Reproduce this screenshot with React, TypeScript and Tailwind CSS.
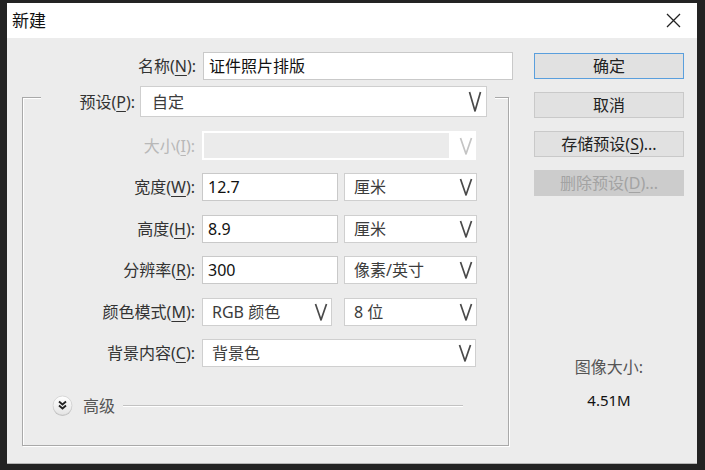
import React from 'react'

const font = "font-['Noto_Sans','Noto_Sans_CJK_SC',sans-serif]"

const Chevron: React.FC<{ tall?: boolean; disabled?: boolean }> = ({ tall, disabled }) => (
  <svg width="14" height={tall ? 21 : 18} viewBox={tall ? '0 0 14 21' : '0 0 14 18'} fill="none">
    <polyline
      points={tall ? '1.5,1 7,20 12.5,1' : '1.5,1 7,17 12.5,1'}
      stroke={disabled ? '#c4c4c4' : '#4a4a4a'}
      strokeWidth="1.7"
      strokeLinejoin="round"
    />
  </svg>
)

// label like 名称(N):
const Label: React.FC<{ text: string; mn: string; w: string; disabled?: boolean }> = ({ text, mn, w, disabled }) => (
  <div className={`${w} shrink-0 text-right text-[16px] leading-none ${disabled ? 'text-[#b8b8b8]' : 'text-[#333]'}`}>
    {text}(<span className="underline underline-offset-[3px]">{mn}</span>):
  </div>
)

const TextBox: React.FC<{ value: string; w: string }> = ({ value, w }) => (
  <div className={`${w} h-[28px] border border-[#c9c9c9] bg-white flex items-center pl-[5px] text-[16px] text-[#111]`}>
    {value}
  </div>
)

const Select: React.FC<{ value: string; w: string; pl?: string }> = ({ value, w, pl = 'pl-[9px]' }) => (
  <div className={`${w} h-[28px] border border-[#cfcfcf] bg-white flex items-center justify-between ${pl} pr-[3px] text-[16px] text-[#3c3c3c]`}>
    <span>{value}</span>
    <Chevron />
  </div>
)

const Button: React.FC<{ children: React.ReactNode; primary?: boolean; disabled?: boolean }> = ({ children, primary, disabled }) => (
  <div
    className={`h-[26px] flex items-center justify-center text-[16px] border ${
      disabled
        ? 'bg-[#cccccc] border-[#cccccc] text-[#a3a3a3]'
        : primary
        ? 'bg-[#e1e1e1] border-[#5a9fdd] text-[#222]'
        : 'bg-[#e1e1e1] border-[#c9c9c9] text-[#222]'
    }`}
  >
    {children}
  </div>
)

const Row: React.FC<{ children: React.ReactNode; className?: string }> = ({ children, className = '' }) => (
  <div className={`flex items-center gap-[7px] ${className}`}>{children}</div>
)

const AdvancedIcon = () => (
  <svg width="21" height="22" viewBox="0 0 21 22">
    <defs>
      <linearGradient id="adv" x1="0" y1="0" x2="0" y2="1">
        <stop offset="0" stopColor="#ffffff" />
        <stop offset="1" stopColor="#e4e4e4" />
      </linearGradient>
    </defs>
    <circle cx="10.5" cy="11.5" r="9.5" fill="#bdbdbd" />
    <circle cx="10.5" cy="10.5" r="9.5" fill="url(#adv)" stroke="#cfcfcf" strokeWidth="0.8" />
    <polyline points="7,6.5 10.5,9.5 14,6.5" fill="none" stroke="#222" strokeWidth="1.8" />
    <polyline points="7,10.5 10.5,13.5 14,10.5" fill="none" stroke="#222" strokeWidth="1.8" />
  </svg>
)

export default function App() {
  return (
    <div className={`w-[705px] h-[470px] bg-[#232323] pt-[3px] pl-[7px] ${font}`}>
      <div className="w-[690px] h-[461px] bg-[#ececec] flex flex-col border-b border-[#b5b5b5]">
        {/* title bar */}
        <div className="h-[35px] shrink-0 bg-white flex items-center justify-between pl-[5px] pr-[16px]">
          <span className="text-[17px] text-[#111]">新建</span>
          <svg width="15" height="15" viewBox="0 0 15 15">
            <path d="M1 1 L14 14 M14 1 L1 14" stroke="#222" strokeWidth="1.3" />
          </svg>
        </div>

        <div className="flex-1 flex">
          {/* left side */}
          <div className="w-[527px] pt-[14px]">
            <Row>
              <Label text="名称" mn="N" w="w-[189px]" />
              <TextBox value="证件照片排版" w="w-[310px]" />
            </Row>

            <div className="ml-[15px] mt-[17px] w-[487px] border border-[#a9a9a9] shadow-[inset_1px_1px_0_#fff,1px_1px_0_#fff]">
              {/* preset sits on the top edge of the frame */}
              <div className="-mt-[12px] ml-[18px] w-[454px] bg-[#ececec] flex items-center justify-end gap-[5px] pr-[8px]">
                <Label text="预设" mn="P" w="w-auto" />
                <div className="w-[347px] h-[31px] border border-[#cfcfcf] bg-white flex items-center justify-between pl-[11px] pr-[4px] text-[16px] text-[#3c3c3c]">
                  <span>自定</span>
                  <Chevron tall />
                </div>
              </div>

              <Row className="mt-[14px]">
                <Label text="大小" mn="I" w="w-[172px]" disabled />
                <div className="w-[274px] h-[29px] bg-white flex items-center justify-between p-[2px] pr-[3px]">
                  <div className="w-[245px] h-full bg-[#ebebeb]" />
                  <Chevron disabled />
                </div>
              </Row>
              <Row className="mt-[13px]">
                <Label text="宽度" mn="W" w="w-[172px]" />
                <TextBox value="12.7" w="w-[136px]" />
                <div className="ml-[-1px]">
                  <Select value="厘米" w="w-[133px]" />
                </div>
              </Row>
              <Row className="mt-[14px]">
                <Label text="高度" mn="H" w="w-[172px]" />
                <TextBox value="8.9" w="w-[136px]" />
                <div className="ml-[-1px]">
                  <Select value="厘米" w="w-[133px]" />
                </div>
              </Row>
              <Row className="mt-[13px]">
                <Label text="分辨率" mn="R" w="w-[172px]" />
                <TextBox value="300" w="w-[136px]" />
                <div className="ml-[-1px]">
                  <Select value="像素/英寸" w="w-[133px]" />
                </div>
              </Row>
              <Row className="mt-[14px]">
                <Label text="颜色模式" mn="M" w="w-[172px]" />
                <Select value="RGB 颜色" w="w-[130px]" />
                <div className="ml-[5px]">
                  <Select value="8 位" w="w-[133px]" />
                </div>
              </Row>
              <Row className="mt-[13px]">
                <Label text="背景内容" mn="C" w="w-[172px]" />
                <Select value="背景色" w="w-[274px]" />
              </Row>

              <div className="mt-[28px] mb-[28px] ml-[29px] h-[22px] flex items-center">
                <AdvancedIcon />
                <span className="ml-[10px] text-[16px] text-[#555]">高级</span>
                <div className="ml-[8px] w-[340px] h-[2px] border-t border-[#c2c2c2] border-b border-b-white" />
              </div>
            </div>
          </div>

          {/* right side */}
          <div className="w-[150px] pt-[15px] flex flex-col">
            <div className="flex flex-col gap-[13px]">
              <Button primary>确定</Button>
              <Button>取消</Button>
              <Button>
                存储预设(<span className="underline underline-offset-[3px]">S</span>)...
              </Button>
              <Button disabled>
                删除预设(<span className="underline underline-offset-[3px]">D</span>)...
              </Button>
            </div>
            <div className="mt-[161px] text-center text-[16px] leading-[20px] text-[#555]">图像大小:</div>
            <div className="mt-[13px] text-center text-[15px] leading-[20px] text-[#111]">4.51M</div>
          </div>
        </div>
      </div>
    </div>
  )
}
